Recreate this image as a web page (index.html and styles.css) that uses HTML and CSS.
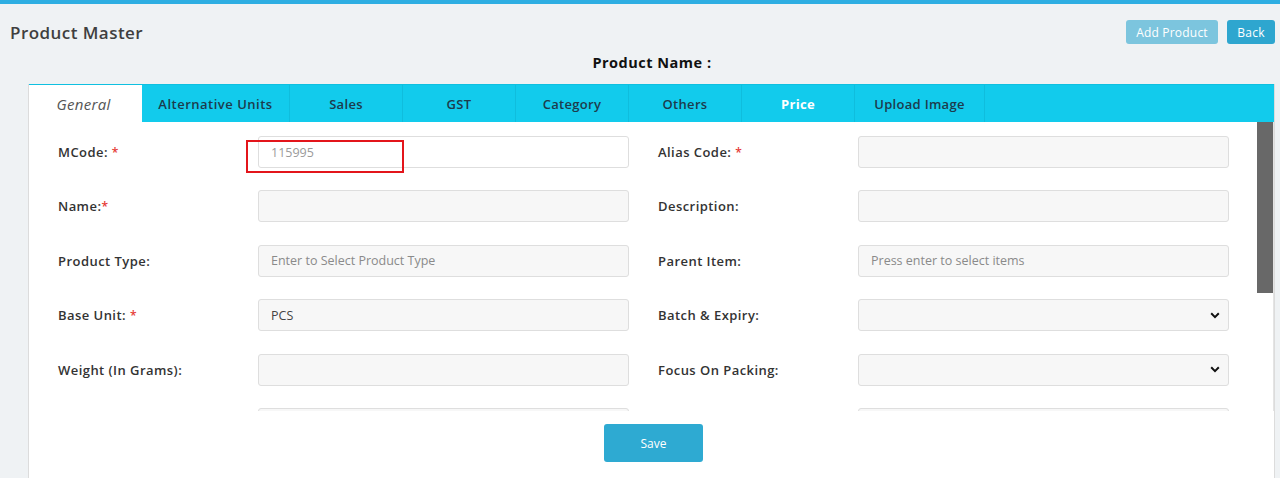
FILE: index.html
```html
<!DOCTYPE html>
<html>
<head>
<meta charset="utf-8">
<link rel="stylesheet" href="styles.css">
</head>
<body>
<div class="topline"></div>
<header class="header">
  <h1 class="page-title">Product Master</h1>
  <div class="header-actions">
    <button class="btn btn-light">Add Product</button>
    <button class="btn btn-blue">Back</button>
  </div>
</header>
<div class="product-name">Product Name :</div>
<div class="card">
  <nav class="tabs">
    <div class="tab active">General</div>
    <div class="tab wide">Alternative Units</div>
    <div class="tab">Sales</div>
    <div class="tab">GST</div>
    <div class="tab">Category</div>
    <div class="tab">Others</div>
    <div class="tab white">Price</div>
    <div class="tab upload">Upload Image</div>
  </nav>
  <div class="scroll-wrap">
    <div class="scroll">
      <div class="form">
        <label class="lbl">MCode: <span class="req">*</span></label>
        <div class="cell">
          <div class="input focus"><span class="val muted">115995</span></div>
          <div class="highlight"></div>
        </div>
        <label class="lbl">Alias Code: <span class="req">*</span></label>
        <div class="cell"><div class="input"></div></div>

        <label class="lbl">Name:<span class="req">*</span></label>
        <div class="cell"><div class="input"></div></div>
        <label class="lbl">Description:</label>
        <div class="cell"><div class="input"></div></div>

        <label class="lbl">Product Type:</label>
        <div class="cell"><div class="input"><span class="val ph">Enter to Select Product Type</span></div></div>
        <label class="lbl">Parent Item:</label>
        <div class="cell"><div class="input"><span class="val ph">Press enter to select items</span></div></div>

        <label class="lbl">Base Unit: <span class="req">*</span></label>
        <div class="cell"><div class="input"><span class="val dark">PCS</span></div></div>
        <label class="lbl">Batch &amp; Expiry:</label>
        <div class="cell"><div class="input select"><svg class="chev" width="10" height="7" viewBox="0 0 10 7"><path d="M1.2 1.3 L5 5.1 L8.8 1.3" fill="none" stroke="#111" stroke-width="2"/></svg></div></div>

        <label class="lbl">Weight (In Grams):</label>
        <div class="cell"><div class="input"></div></div>
        <label class="lbl">Focus On Packing:</label>
        <div class="cell"><div class="input select"><svg class="chev" width="10" height="7" viewBox="0 0 10 7"><path d="M1.2 1.3 L5 5.1 L8.8 1.3" fill="none" stroke="#111" stroke-width="2"/></svg></div></div>

        <label class="lbl"></label>
        <div class="cell"><div class="input"></div></div>
        <label class="lbl"></label>
        <div class="cell"><div class="input"></div></div>
      </div>
    </div>
    <div class="scrollbar"><div class="thumb"></div></div>
  </div>
  <div class="actions">
    <button class="btn-save">Save</button>
  </div>
</div>
</body>
</html>
```
FILE: styles.css
```css
* { box-sizing: border-box; }
html, body { margin: 0; padding: 0; }
body {
  background: #eff2f4;
  font-family: "Open Sans", "Noto Sans", sans-serif;
  color: #333;
  height: 478px;
  overflow: hidden;
}
.topline { height: 4px; background: #2eaee2; }
.header {
  display: flex;
  justify-content: space-between;
  align-items: flex-start;
  padding: 16px 5px 0 10px;
  height: 50px;
}
.page-title {
  margin: 1px 0 0;
  font-size: 17px;
  font-weight: 600;
  color: #3f3f3f;
  letter-spacing: 0.45px;
}
.header-actions { display: flex; gap: 9px; }
.btn {
  border: none;
  border-radius: 3px;
  height: 24px;
  color: #fff;
  font-family: "Open Sans", sans-serif;
  font-size: 12px;
  font-weight: 500;
  padding: 0 6px;
  letter-spacing: 0.2px;
}
.btn-light { background: #7cc5de; width: 92px; }
.btn-blue { background: #2ea6cf; width: 48px; }
.product-name {
  text-align: center;
  font-size: 14.5px;
  font-weight: 700;
  color: #111;
  height: 30px;
  line-height: 18px;
  padding-left: 24px;
  letter-spacing: 0.5px;
}
.card {
  margin: 0 5px 0 28px;
  background: #fff;
  border: 1px solid #dcdcdc;
  border-top: none;
  height: 400px;
}
.tabs {
  display: flex;
  height: 38px;
  background: #12cbec;
  border-top: 1px solid #0fc0e0;
}
.tab {
  width: 113px;
  display: flex;
  align-items: center;
  justify-content: center;
  font-size: 13px;
  font-weight: 600;
  color: #1d3b4c;
  border-right: 1px solid #0fbddd;
  letter-spacing: 0.3px;
}
.tab.wide { width: 148px; letter-spacing: 0.5px; }
.tab.upload { width: 130px; }
.tab.white { color: #fff; font-weight: 700; }
.tab.active {
  background: #fff;
  font-style: italic;
  font-weight: 500;
  font-size: 15px;
  color: #555;
  border-right: none;
  padding-right: 4px;
}
.scroll-wrap { display: flex; height: 289px; }
.scroll {
  flex: 1;
  overflow: hidden;
}
.scrollbar {
  width: 17px;
  background: #fff;
  border-right: 1px solid #e4e4e4;
}
.thumb { height: 171px; width: 16px; background: #686868; }
.form {
  display: grid;
  grid-template-columns: 200px 371px 229px 371px;
  row-gap: 22.4px;
  padding: 14px 0 14px 29px;
}
.form > .lbl:nth-child(4n+3) { padding-left: 29px; }
.lbl {
  font-size: 13px;
  font-weight: 600;
  color: #333;
  line-height: 32px;
  height: 32px;
  letter-spacing: 0.45px;
}
.req { color: #e53935; font-size: 12px; }
.cell { position: relative; }
.input {
  height: 32px;
  border: 1px solid #dedede;
  border-radius: 3px;
  background: #f7f7f7;
  display: flex;
  align-items: center;
  padding: 0 12px;
}
.input.focus { background: #fff; }
.input.select { justify-content: flex-end; padding-right: 8px; }
.val { font-size: 12.5px; font-weight: 400; }
.val.muted { color: #9a9a9a; }
.val.ph { color: #8a8a8a; }
.val.dark { color: #444; }
.highlight {
  position: absolute;
  left: -12px;
  top: 4px;
  width: 158px;
  height: 33px;
  border: 2px solid #e3151b;
}
.actions {
  display: flex;
  justify-content: center;
  padding: 13px 0 0 4px;
}
.btn-save {
  width: 99px;
  height: 38px;
  border: none;
  border-radius: 3px;
  background: #2eaad2;
  color: #fff;
  font-family: "Open Sans", sans-serif;
  font-size: 12px;
}
```
